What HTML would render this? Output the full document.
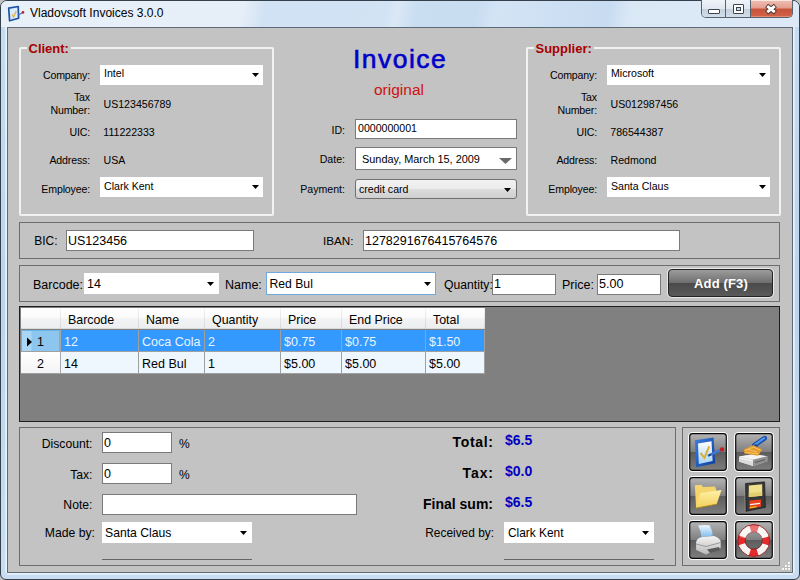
<!DOCTYPE html>
<html><head><meta charset="utf-8">
<style>
*{box-sizing:border-box}
body{margin:0;width:800px;height:580px;overflow:hidden;position:relative;background:#c3c3c3;font-family:"Liberation Sans",sans-serif;color:#000}
.a{position:absolute}
.t{position:absolute;white-space:nowrap;line-height:1}
.ib{position:absolute;width:40px;height:40px}
.ib>svg{position:absolute;left:0;top:0}
</style></head><body>
<svg width="0" height="0" style="position:absolute"><defs>
<linearGradient id="bg" x1="0" y1="0" x2="0" y2="1"><stop offset="0" stop-color="#b2b2b2"/><stop offset="0.5" stop-color="#7e7e7e"/><stop offset="0.5" stop-color="#5c5c5c"/><stop offset="1" stop-color="#7c7c7c"/></linearGradient>
<linearGradient id="docb" x1="0" y1="0" x2="1" y2="1"><stop offset="0" stop-color="#3a7fe0"/><stop offset="1" stop-color="#0c3c9c"/></linearGradient>
<linearGradient id="page" x1="0" y1="0" x2="0" y2="1"><stop offset="0" stop-color="#ffffff"/><stop offset="1" stop-color="#a9d3f5"/></linearGradient>
<linearGradient id="fold" x1="0" y1="0" x2="0" y2="1"><stop offset="0" stop-color="#fff2a8"/><stop offset="1" stop-color="#f2cf5a"/></linearGradient>
<linearGradient id="paper" x1="0" y1="0" x2="0" y2="1"><stop offset="0" stop-color="#f0f8ff"/><stop offset="1" stop-color="#7fbef0"/></linearGradient>
<linearGradient id="prn" x1="0" y1="0" x2="0" y2="1"><stop offset="0" stop-color="#f4f4f4"/><stop offset="1" stop-color="#b8b8b8"/></linearGradient>
</defs></svg>
<div class="a" style="left:0px;top:0px;width:800px;height:580px;border:1px solid #34404c;border-radius:7px 7px 6px 6px;background:linear-gradient(180deg,#c6dcf2 0,#bcd4ee 300px,#c8ddf2 580px)"></div>
<div class="a" style="left:1px;top:1px;width:798px;height:26px;border-radius:6px 6px 0 0;background:linear-gradient(100deg,#e8f0f8 0,#e6eef8 240px,#d0e2f4 262px,#d2e3f4 380px,#dbe8f6 392px,#cadef2 410px,#c9ddf1 470px,#d3e4f5 490px,#c8dcf1 600px,#dae8f6 622px,#dde9f6 798px)"></div>
<div class="a" style="left:5px;top:27px;width:2px;height:546px;background:linear-gradient(90deg,#d8e8f8,#eef6fd)"></div>
<div class="a" style="left:793px;top:27px;width:2px;height:546px;background:linear-gradient(90deg,#eef6fd,#d8e8f8)"></div>
<div class="a" style="left:7px;top:573px;width:786px;height:2px;background:linear-gradient(180deg,#eef6fd,#d8e8f8)"></div>
<svg class="a" style="left:0;top:0" width="28" height="26" viewBox="0 0 28 26"><path d="M8.7 8.2 L18.2 6.5 L18.6 18.3 L9.6 20.8 Z" fill="#d8ecfc" stroke="#1f50a8" stroke-width="1.7" stroke-linejoin="round"/><path d="M12 14.5 L13.6 17 L16.2 11" stroke="#d8b848" stroke-width="1.3" fill="none"/><path d="M18.5 15 L22.3 12.7" stroke="#4a78d0" stroke-width="1.3"/><circle cx="23" cy="12.4" r="1.3" fill="#b02828"/></svg>
<div class="t" style="left:30px;top:7px;font-size:12px;">Vladovsoft Invoices 3.0.0</div>
<div class="a" style="left:701px;top:0;width:92px;height:18px;border:1px solid #56626e;border-top:none;border-radius:0 0 5px 5px;overflow:hidden">
 <div class="a" style="left:0;top:0;width:24px;height:17px;background:linear-gradient(180deg,#eef3f9 0,#dfe7f0 50%,#c4d0dc 51%,#d2dde8 100%);border-right:1px solid #56626e"></div>
 <div class="a" style="left:24px;top:0;width:25px;height:17px;background:linear-gradient(180deg,#eef3f9 0,#dfe7f0 50%,#c4d0dc 51%,#d2dde8 100%);border-right:1px solid #56626e"></div>
 <div class="a" style="left:49px;top:0;width:43px;height:17px;background:linear-gradient(180deg,#f0c0b4 0,#e4a090 45%,#c8543a 55%,#d06248 100%);box-shadow:inset 0 1px 0 #fbe8e0,inset 0 -1px 0 #e88870"></div>
 <div class="a" style="left:6px;top:9px;width:12px;height:5px;background:#fff;border:1px solid #394450;border-radius:1px"></div>
 <div class="a" style="left:31px;top:4px;width:11px;height:10px;background:#fff;border:1px solid #394450;border-radius:1px"></div>
 <div class="a" style="left:34px;top:7px;width:5px;height:4px;background:#cfd9e3;border:1px solid #394450"></div>
 <svg class="a" style="left:61px;top:1.8px" width="16" height="14" viewBox="0 0 16 14"><path d="M3.6 3.6 L12.4 10.6 M12.4 3.6 L3.6 10.6" stroke="#40302c" stroke-width="4.6" stroke-linecap="butt"/><path d="M4.2 4.1 L11.8 10.1 M11.8 4.1 L4.2 10.1" stroke="#fff" stroke-width="3" stroke-linecap="butt"/></svg>
</div>
<div class="a" style="left:7px;top:27px;width:786px;height:546px;border:1px solid #5e6a76;background:#c3c3c3"></div>
<div class="a" style="left:19px;top:47px;width:255px;height:169px;border:2px solid #f2f2f2;border-radius:2px"></div>
<div class="t" style="left:26.5px;top:42.3px;font-size:13px;font-weight:bold;color:#a80000;background:#c3c3c3;padding:0 2px">Client:</div>
<div class="t" style="left:20px;top:70px;font-size:10.6px;width:70px;text-align:right;letter-spacing:-0.15px">Company:</div>
<div class="a" style="left:100px;top:65px;width:163px;height:20px;background:#fff"></div>
<div class="t" style="left:104px;top:68px;font-size:10.6px;">Intel</div>
<svg class="a" style="left:252px;top:73px" width="7" height="4" viewBox="0 0 7 4"><path d="M0 0 L7 0 L3.5 4 Z" fill="#000"/></svg>
<div class="t" style="left:20px;top:92px;font-size:10.6px;width:70px;text-align:right;letter-spacing:-0.15px">Tax</div>
<div class="t" style="left:20px;top:105px;font-size:10.6px;width:70px;text-align:right;letter-spacing:-0.15px">Number:</div>
<div class="t" style="left:103.5px;top:99px;font-size:10.6px;">US123456789</div>
<div class="t" style="left:20px;top:127px;font-size:10.6px;width:70px;text-align:right;letter-spacing:-0.15px">UIC:</div>
<div class="t" style="left:103.3px;top:127px;font-size:10.6px;">111222333</div>
<div class="t" style="left:20px;top:155px;font-size:10.6px;width:70px;text-align:right;letter-spacing:-0.15px">Address:</div>
<div class="t" style="left:103.5px;top:155px;font-size:10.6px;">USA</div>
<div class="t" style="left:20px;top:184px;font-size:10.6px;width:70px;text-align:right;letter-spacing:-0.15px">Employee:</div>
<div class="a" style="left:100px;top:177px;width:163px;height:20px;background:#fff"></div>
<div class="t" style="left:104px;top:180.5px;font-size:10.6px;">Clark Kent</div>
<svg class="a" style="left:252px;top:185px" width="7" height="4" viewBox="0 0 7 4"><path d="M0 0 L7 0 L3.5 4 Z" fill="#000"/></svg>
<div class="a" style="left:526px;top:47px;width:255px;height:169px;border:2px solid #f2f2f2;border-radius:2px"></div>
<div class="t" style="left:533.5px;top:42.3px;font-size:13px;font-weight:bold;color:#a80000;background:#c3c3c3;padding:0 2px">Supplier:</div>
<div class="t" style="left:527px;top:70px;font-size:10.6px;width:70px;text-align:right;letter-spacing:-0.15px">Company:</div>
<div class="a" style="left:607px;top:65px;width:163px;height:20px;background:#fff"></div>
<div class="t" style="left:611px;top:68px;font-size:10.6px;">Microsoft</div>
<svg class="a" style="left:759px;top:73px" width="7" height="4" viewBox="0 0 7 4"><path d="M0 0 L7 0 L3.5 4 Z" fill="#000"/></svg>
<div class="t" style="left:527px;top:92px;font-size:10.6px;width:70px;text-align:right;letter-spacing:-0.15px">Tax</div>
<div class="t" style="left:527px;top:105px;font-size:10.6px;width:70px;text-align:right;letter-spacing:-0.15px">Number:</div>
<div class="t" style="left:610.5px;top:99px;font-size:10.6px;">US012987456</div>
<div class="t" style="left:527px;top:127px;font-size:10.6px;width:70px;text-align:right;letter-spacing:-0.15px">UIC:</div>
<div class="t" style="left:610.3px;top:127px;font-size:10.6px;">786544387</div>
<div class="t" style="left:527px;top:155px;font-size:10.6px;width:70px;text-align:right;letter-spacing:-0.15px">Address:</div>
<div class="t" style="left:610.5px;top:155px;font-size:10.6px;">Redmond</div>
<div class="t" style="left:527px;top:184px;font-size:10.6px;width:70px;text-align:right;letter-spacing:-0.15px">Employee:</div>
<div class="a" style="left:607px;top:177px;width:163px;height:20px;background:#fff"></div>
<div class="t" style="left:611px;top:180.5px;font-size:10.6px;">Santa Claus</div>
<svg class="a" style="left:759px;top:185px" width="7" height="4" viewBox="0 0 7 4"><path d="M0 0 L7 0 L3.5 4 Z" fill="#000"/></svg>
<div class="t" style="left:353px;top:45.5px;font-size:26.5px;color:#0000c8;letter-spacing:1.45px;-webkit-text-stroke:0.6px #0000c8">Invoice</div>
<div class="t" style="left:374px;top:82px;font-size:15.5px;color:#d01010">original</div>
<div class="t" style="left:280px;top:124.5px;font-size:10.6px;width:65px;text-align:right;">ID:</div>
<div class="a" style="left:355px;top:119px;width:162px;height:20px;background:#fff;border:1px solid #7a7a7a"></div>
<div class="t" style="left:358px;top:122.5px;font-size:10.6px;">0000000001</div>
<div class="t" style="left:280px;top:154px;font-size:10.6px;width:65px;text-align:right;">Date:</div>
<div class="a" style="left:355px;top:147px;width:162px;height:23px;background:#fff;border:1px solid #7a7a7a"></div>
<div class="t" style="left:362px;top:154px;font-size:10.9px;">Sunday, March 15, 2009</div>
<svg class="a" style="left:499px;top:158px" width="13" height="6" viewBox="0 0 13 6"><path d="M0 0 L13 0 L6.5 6 Z" fill="#6a6a6a"/></svg>
<div class="t" style="left:280px;top:184px;font-size:10.6px;width:65px;text-align:right;">Payment:</div>
<div class="a" style="left:355px;top:179px;width:162px;height:20px;border:1px solid #707070;border-radius:3px;background:linear-gradient(180deg,#f2f2f2 0,#ebebeb 50%,#dddddd 51%,#cfcfcf 100%)"></div>
<div class="t" style="left:359px;top:183.5px;font-size:10.6px;">credit card</div>
<svg class="a" style="left:504px;top:188px" width="7" height="4" viewBox="0 0 7 4"><path d="M0 0 L7 0 L3.5 4 Z" fill="#000"/></svg>
<div class="a" style="left:19px;top:222px;width:761px;height:37px;border:1px solid #6e6e6e"></div>
<div class="t" style="left:20px;top:235px;font-size:12px;width:37.5px;text-align:right;">BIC:</div>
<div class="a" style="left:66px;top:230px;width:188px;height:21px;background:#fff;border:1px solid #7a7a7a"></div>
<div class="t" style="left:68px;top:234.5px;font-size:12.5px;">US123456</div>
<div class="t" style="left:323px;top:235px;font-size:11.7px;">IBAN:</div>
<div class="a" style="left:363px;top:230px;width:317px;height:21px;background:#fff;border:1px solid #7a7a7a"></div>
<div class="t" style="left:365px;top:235px;font-size:12.5px;">1278291676415764576</div>
<div class="a" style="left:19px;top:265px;width:761px;height:37px;border:1px solid #6e6e6e"></div>
<div class="t" style="left:33px;top:279px;font-size:12.5px;">Barcode:</div>
<div class="a" style="left:84px;top:273px;width:135px;height:21px;background:#fff"></div>
<div class="t" style="left:87px;top:278px;font-size:12.5px;">14</div>
<svg class="a" style="left:207px;top:282px" width="7" height="4" viewBox="0 0 7 4"><path d="M0 0 L7 0 L3.5 4 Z" fill="#000"/></svg>
<div class="t" style="left:225px;top:279px;font-size:12.5px;">Name:</div>
<div class="a" style="left:266px;top:272px;width:170px;height:23px;background:#fff;border:1px solid #6fa8dc"></div>
<div class="t" style="left:269.5px;top:278px;font-size:12.2px;">Red Bul</div>
<svg class="a" style="left:424px;top:282px" width="7" height="4" viewBox="0 0 7 4"><path d="M0 0 L7 0 L3.5 4 Z" fill="#000"/></svg>
<div class="t" style="left:444px;top:279px;font-size:12.2px;">Quantity:</div>
<div class="a" style="left:492px;top:274px;width:64px;height:21px;background:#fff;border:1px solid #7a7a7a"></div>
<div class="t" style="left:494px;top:278px;font-size:12.5px;">1</div>
<div class="t" style="left:562px;top:279px;font-size:12.5px;">Price:</div>
<div class="a" style="left:597px;top:274px;width:64px;height:21px;background:#fff;border:1px solid #7a7a7a"></div>
<div class="t" style="left:599px;top:278px;font-size:12.5px;">5.00</div>
<div class="a" style="left:668px;top:269px;width:105px;height:28px;border:1px solid #222;border-radius:4px;box-shadow:0 0 0 1px #e8e8e8;background:linear-gradient(180deg,#9c9c9c 0,#6e6e6e 50%,#4a4a4a 51%,#5a5a5a 100%)"></div>
<div class="t" style="left:668px;top:277.3px;font-size:13px;width:106px;font-weight:bold;color:#fff;text-align:center;letter-spacing:0.15px">Add (F3)</div>
<div class="a" style="left:19px;top:306px;width:761px;height:116px;background:#808080;border:1px solid #1e1e1e"></div>
<div class="a" style="left:21px;top:308px;width:464px;height:21px;background:linear-gradient(180deg,#ffffff 0,#fbfbfc 45%,#f1f2f4 55%,#eceef0 100%);border-bottom:1px solid #d8dadc"></div>
<div class="a" style="left:60px;top:308px;width:1px;height:21px;background:linear-gradient(180deg,#f4f4f4,#d5d5d5)"></div>
<div class="a" style="left:138px;top:308px;width:1px;height:21px;background:linear-gradient(180deg,#f4f4f4,#d5d5d5)"></div>
<div class="t" style="left:68px;top:313.8px;font-size:12.4px;">Barcode</div>
<div class="a" style="left:204px;top:308px;width:1px;height:21px;background:linear-gradient(180deg,#f4f4f4,#d5d5d5)"></div>
<div class="t" style="left:146px;top:313.8px;font-size:12.4px;">Name</div>
<div class="a" style="left:280px;top:308px;width:1px;height:21px;background:linear-gradient(180deg,#f4f4f4,#d5d5d5)"></div>
<div class="t" style="left:212px;top:313.8px;font-size:12.4px;">Quantity</div>
<div class="a" style="left:341px;top:308px;width:1px;height:21px;background:linear-gradient(180deg,#f4f4f4,#d5d5d5)"></div>
<div class="t" style="left:288px;top:313.8px;font-size:12.4px;">Price</div>
<div class="a" style="left:425px;top:308px;width:1px;height:21px;background:linear-gradient(180deg,#f4f4f4,#d5d5d5)"></div>
<div class="t" style="left:349px;top:313.8px;font-size:12.4px;">End Price</div>
<div class="a" style="left:484px;top:308px;width:1px;height:21px;background:linear-gradient(180deg,#f4f4f4,#d5d5d5)"></div>
<div class="t" style="left:433px;top:313.8px;font-size:12.4px;">Total</div>
<div class="a" style="left:21px;top:330px;width:39px;height:22px;background:linear-gradient(90deg,#a9d6f5 0,#a9d6f5 9px,#8cc6ef 10px,#8cc6ef 100%);border:1px solid #6cb2e4"></div>
<svg class="a" style="left:26px;top:337px" width="7" height="10" viewBox="0 0 7 10"><path d="M1 0.5 L6 5 L1 9.5Z" fill="#000"/></svg>
<div class="t" style="left:37px;top:336px;font-size:12.5px;">1</div>
<div class="a" style="left:60px;top:330px;width:1px;height:22px;background:#a8a8a8"></div>
<div class="a" style="left:61px;top:330px;width:424px;height:22px;background:#3399ff"></div>
<div class="a" style="left:138px;top:330px;width:1px;height:22px;background:#a0a0a0"></div>
<div class="t" style="left:64px;top:336px;font-size:12.5px;color:#eaf4ff">12</div>
<div class="a" style="left:204px;top:330px;width:1px;height:22px;background:#a0a0a0"></div>
<div class="t" style="left:142px;top:336px;font-size:12.5px;color:#eaf4ff">Coca Cola</div>
<div class="a" style="left:280px;top:330px;width:1px;height:22px;background:#a0a0a0"></div>
<div class="t" style="left:208px;top:336px;font-size:12.5px;color:#eaf4ff">2</div>
<div class="a" style="left:341px;top:330px;width:1px;height:22px;background:#a0a0a0"></div>
<div class="t" style="left:284px;top:336px;font-size:12.5px;color:#eaf4ff">$0.75</div>
<div class="a" style="left:425px;top:330px;width:1px;height:22px;background:#a0a0a0"></div>
<div class="t" style="left:345px;top:336px;font-size:12.5px;color:#eaf4ff">$0.75</div>
<div class="a" style="left:484px;top:330px;width:1px;height:22px;background:#a0a0a0"></div>
<div class="t" style="left:429px;top:336px;font-size:12.5px;color:#eaf4ff">$1.50</div>
<div class="a" style="left:21px;top:351px;width:464px;height:1px;background:#a0a0a0"></div>
<div class="a" style="left:21px;top:352px;width:39px;height:22px;background:linear-gradient(180deg,#ffffff,#f3f4f6)"></div>
<div class="t" style="left:37px;top:358px;font-size:12.5px;">2</div>
<div class="a" style="left:60px;top:352px;width:1px;height:22px;background:#a8a8a8"></div>
<div class="a" style="left:61px;top:352px;width:424px;height:22px;background:#eef6fe"></div>
<div class="a" style="left:138px;top:352px;width:1px;height:22px;background:#a0a0a0"></div>
<div class="t" style="left:64px;top:358px;font-size:12.5px;color:#000">14</div>
<div class="a" style="left:204px;top:352px;width:1px;height:22px;background:#a0a0a0"></div>
<div class="t" style="left:142px;top:358px;font-size:12.5px;color:#000">Red Bul</div>
<div class="a" style="left:280px;top:352px;width:1px;height:22px;background:#a0a0a0"></div>
<div class="t" style="left:208px;top:358px;font-size:12.5px;color:#000">1</div>
<div class="a" style="left:341px;top:352px;width:1px;height:22px;background:#a0a0a0"></div>
<div class="t" style="left:284px;top:358px;font-size:12.5px;color:#000">$5.00</div>
<div class="a" style="left:425px;top:352px;width:1px;height:22px;background:#a0a0a0"></div>
<div class="t" style="left:345px;top:358px;font-size:12.5px;color:#000">$5.00</div>
<div class="a" style="left:484px;top:352px;width:1px;height:22px;background:#a0a0a0"></div>
<div class="t" style="left:429px;top:358px;font-size:12.5px;color:#000">$5.00</div>
<div class="a" style="left:21px;top:373px;width:464px;height:1px;background:#a0a0a0"></div>
<div class="a" style="left:19px;top:427px;width:657px;height:139px;border:1px solid #6e6e6e"></div>
<div class="a" style="left:682px;top:427px;width:98px;height:139px;border:1px solid #6e6e6e"></div>
<div class="t" style="left:20px;top:438px;font-size:12.2px;width:72.5px;text-align:right;">Discount:</div>
<div class="a" style="left:102px;top:432px;width:70px;height:21px;background:#fff;border:1px solid #7a7a7a"></div>
<div class="t" style="left:104px;top:437px;font-size:12.5px;">0</div>
<div class="t" style="left:179px;top:438px;font-size:12px;">%</div>
<div class="t" style="left:20px;top:469px;font-size:12.2px;width:72.5px;text-align:right;">Tax:</div>
<div class="a" style="left:102px;top:463px;width:70px;height:21px;background:#fff;border:1px solid #7a7a7a"></div>
<div class="t" style="left:104px;top:468px;font-size:12.5px;">0</div>
<div class="t" style="left:179px;top:469px;font-size:12px;">%</div>
<div class="t" style="left:20px;top:499px;font-size:12.2px;width:72.5px;text-align:right;">Note:</div>
<div class="a" style="left:102px;top:494px;width:255px;height:21px;background:#fff;border:1px solid #7a7a7a"></div>
<div class="t" style="left:20px;top:527px;font-size:12.2px;width:75px;text-align:right;">Made by:</div>
<div class="a" style="left:102px;top:522px;width:150px;height:21px;background:#fff"></div>
<div class="t" style="left:105px;top:527px;font-size:12.2px;">Santa Claus</div>
<svg class="a" style="left:240px;top:531px" width="7" height="4" viewBox="0 0 7 4"><path d="M0 0 L7 0 L3.5 4 Z" fill="#000"/></svg>
<div class="a" style="left:102px;top:559px;width:150px;height:1px;background:#666"></div>
<div class="t" style="left:400px;top:435px;font-size:14px;width:93.7px;text-align:right;font-weight:bold;letter-spacing:0.7px">Total:</div>
<div class="t" style="left:505px;top:433px;font-size:14px;font-weight:bold;color:#0000c0">$6.5</div>
<div class="t" style="left:400px;top:466px;font-size:14px;width:93.9px;text-align:right;font-weight:bold;letter-spacing:0.9px">Tax:</div>
<div class="t" style="left:505px;top:464px;font-size:14px;font-weight:bold;color:#0000c0">$0.0</div>
<div class="t" style="left:400px;top:497px;font-size:14px;width:93px;text-align:right;font-weight:bold;letter-spacing:0px">Final sum:</div>
<div class="t" style="left:505px;top:495px;font-size:14px;font-weight:bold;color:#0000c0">$6.5</div>
<div class="t" style="left:400px;top:527.5px;font-size:11.9px;width:94px;text-align:right;">Received by:</div>
<div class="a" style="left:504px;top:522px;width:150px;height:21px;background:#fff"></div>
<div class="t" style="left:508px;top:527.5px;font-size:11.9px;">Clark Kent</div>
<svg class="a" style="left:642px;top:531px" width="7" height="4" viewBox="0 0 7 4"><path d="M0 0 L7 0 L3.5 4 Z" fill="#000"/></svg>
<div class="a" style="left:504px;top:559px;width:150px;height:1px;background:#666"></div>
<div class="a" style="left:788px;top:562px;width:1.5px;height:1.5px;background:#f8f8f8;box-shadow:0.5px 0.5px 0 #a8a8a8"></div>
<div class="a" style="left:785px;top:565px;width:1.5px;height:1.5px;background:#f8f8f8;box-shadow:0.5px 0.5px 0 #a8a8a8"></div>
<div class="a" style="left:788px;top:565px;width:1.5px;height:1.5px;background:#f8f8f8;box-shadow:0.5px 0.5px 0 #a8a8a8"></div>
<div class="a" style="left:782px;top:568px;width:1.5px;height:1.5px;background:#f8f8f8;box-shadow:0.5px 0.5px 0 #a8a8a8"></div>
<div class="a" style="left:785px;top:568px;width:1.5px;height:1.5px;background:#f8f8f8;box-shadow:0.5px 0.5px 0 #a8a8a8"></div>
<div class="a" style="left:788px;top:568px;width:1.5px;height:1.5px;background:#f8f8f8;box-shadow:0.5px 0.5px 0 #a8a8a8"></div>
<div class="ib" style="left:688px;top:432px"><svg width="40" height="40" viewBox="0 0 40 40"><rect x="0" y="0" width="40" height="40" rx="4.5" fill="#fbfbfb"/><rect x="1.1" y="1.1" width="37.8" height="37.8" rx="3.4" fill="#060606"/><rect x="2.3" y="2.3" width="35.4" height="35.4" rx="2.2" fill="url(#bg)"/><path d="M7 8.3 L25.6 5.5 L27.2 31.3 L8.1 35.3Z" fill="url(#docb)"/><path d="M10 11.5 L23.5 9.3 L24.6 29 L10.8 32Z" fill="url(#page)"/><path d="M12.5 21 L16.4 25.8 L21.2 14.3" stroke="#d9b030" stroke-width="2" fill="none"/><path d="M20.8 23.4 L33 17.9" stroke="#3d78d8" stroke-width="2.6" stroke-linecap="round"/><path d="M20.8 23.4 L23 22.6" stroke="#203050" stroke-width="1.5"/><circle cx="34" cy="17.5" r="2.2" fill="#c02020"/></svg></div>
<div class="ib" style="left:733.5px;top:432px"><svg width="40" height="40" viewBox="0 0 40 40"><rect x="0" y="0" width="40" height="40" rx="4.5" fill="#fbfbfb"/><rect x="1.1" y="1.1" width="37.8" height="37.8" rx="3.4" fill="#060606"/><rect x="2.3" y="2.3" width="35.4" height="35.4" rx="2.2" fill="url(#bg)"/><path d="M5.1 24.6 L19 22.2 L33.3 24.2 L33.3 29.3 L19 34.1 L5.1 29.7Z" fill="#cfcfcf"/><path d="M5.1 24.6 L19 22.2 L33.3 24.2 L19 27.8Z" fill="#f4f4f4"/><path d="M5.1 24.6 L19 27.8 L19 34.1 L5.1 29.7Z" fill="#dcdcdc"/><path d="M19 27.8 L33.3 24.2 L33.3 29.3 L19 34.1Z" fill="#8e8e8e"/><path d="M21 30.5 L31 27.6" stroke="#5a5a5a" stroke-width="1"/><path d="M6 26 L18.5 29" stroke="#ffffff" stroke-width="0.8"/><path d="M20.5 13.2 L30.6 6.2" stroke="#1c4ea8" stroke-width="4.8" stroke-linecap="round"/><path d="M21 12.6 L30.2 6.2" stroke="#4f94ec" stroke-width="2.2" stroke-linecap="round"/><path d="M17.8 14.5 L21.6 12 L24 15 L20 17.5Z" fill="#1a3f90"/><path d="M9.9 17.4 L19.4 13.1 L28.1 17.4 L24.2 23.8 L10.3 21.4Z" fill="#e49a2c"/><path d="M11 18.6 L19.5 15 L26.5 18.5 M11.2 20.4 L24.5 21.8 M14 17.5 L23 20" stroke="#f8c868" stroke-width="0.9" fill="none"/></svg></div>
<div class="ib" style="left:688px;top:476px"><svg width="40" height="40" viewBox="0 0 40 40"><rect x="0" y="0" width="40" height="40" rx="4.5" fill="#fbfbfb"/><rect x="1.1" y="1.1" width="37.8" height="37.8" rx="3.4" fill="#060606"/><rect x="2.3" y="2.3" width="35.4" height="35.4" rx="2.2" fill="url(#bg)"/><path d="M6.9 10.5 L7.5 9.1 L13.5 9 L15 11 L27 10.5 L28.3 14 L28.3 28.2 L8.1 32.1Z" fill="#f3d56c"/><path d="M8.1 32.1 L12.5 17 L33.5 13.9 L28.7 28.2Z" fill="url(#fold)"/><path d="M8.1 32.1 L28.7 28.2" stroke="#b08a20" stroke-width="1"/></svg></div>
<div class="ib" style="left:733.5px;top:476px"><svg width="40" height="40" viewBox="0 0 40 40"><rect x="0" y="0" width="40" height="40" rx="4.5" fill="#fbfbfb"/><rect x="1.1" y="1.1" width="37.8" height="37.8" rx="3.4" fill="#060606"/><rect x="2.3" y="2.3" width="35.4" height="35.4" rx="2.2" fill="url(#bg)"/><path d="M10.4 8 L11.6 7.5 L12 35.3 L10.8 34.8Z" fill="#9a9a9a"/><path d="M11.6 7.5 L30.6 5.9 L31.4 31.3 L12 35.3Z" fill="#383838" stroke="#1a1a1a" stroke-width="0.7"/><path d="M14.8 9.6 L28.2 8.3 L28.2 19.8 L14.8 21Z" fill="#f0e08c"/><path d="M14.8 17 L28.2 16 L28.2 19.8 L14.8 21Z" fill="#e4cf70"/><path d="M15.5 24.6 L27.1 23.4 L27.1 30.6 L15.5 32.9Z" fill="#e8401c"/><path d="M16 28.6 L26 27.4" stroke="#f8f8f8" stroke-width="1.3"/><path d="M15.8 31.6 L22.5 30.6" stroke="#f4c020" stroke-width="1.4"/></svg></div>
<div class="ib" style="left:688px;top:520px"><svg width="40" height="40" viewBox="0 0 40 40"><rect x="0" y="0" width="40" height="40" rx="4.5" fill="#fbfbfb"/><rect x="1.1" y="1.1" width="37.8" height="37.8" rx="3.4" fill="#060606"/><rect x="2.3" y="2.3" width="35.4" height="35.4" rx="2.2" fill="url(#bg)"/><path d="M10.1 5.5 Q15 4.5 21.5 5.2 Q24 9 24.8 15.5 L13.5 17 Q13 11 10.1 5.5Z" fill="url(#paper)"/><path d="M8.1 22 Q9 18 14 17 L26 16 Q31 17.5 32.7 21 L32.7 28 L18 34.5 L8.1 30Z" fill="url(#prn)"/><path d="M8.1 24 L18 26.5 L32.7 22.5" stroke="#8a8a8a" stroke-width="0.8" fill="none"/><path d="M19 29.5 L31 27 L32 30 L22 33Z" fill="#5a5a5a"/></svg></div>
<div class="ib" style="left:733.5px;top:520px"><svg width="40" height="40" viewBox="0 0 40 40"><rect x="0" y="0" width="40" height="40" rx="4.5" fill="#fbfbfb"/><rect x="1.1" y="1.1" width="37.8" height="37.8" rx="3.4" fill="#060606"/><rect x="2.3" y="2.3" width="35.4" height="35.4" rx="2.2" fill="url(#bg)"/><circle cx="19.8" cy="20.6" r="12.3" fill="none" stroke="#f6f2f2" stroke-width="7.4"/><circle cx="19.8" cy="20.6" r="12.3" fill="none" stroke="#e42a2a" stroke-width="7.4" stroke-dasharray="7.8 11.52" stroke-dashoffset="3.9"/><circle cx="19.8" cy="20.6" r="16" fill="none" stroke="#901818" stroke-width="0.9"/><circle cx="19.8" cy="20.6" r="8.6" fill="none" stroke="#701414" stroke-width="0.9"/><path d="M6 17 A14 14 0 0 1 33.6 17 L27.5 18.5 A8 8 0 0 0 12 18.5 Z" fill="#fff" opacity="0.35"/></svg></div>
</body></html>
